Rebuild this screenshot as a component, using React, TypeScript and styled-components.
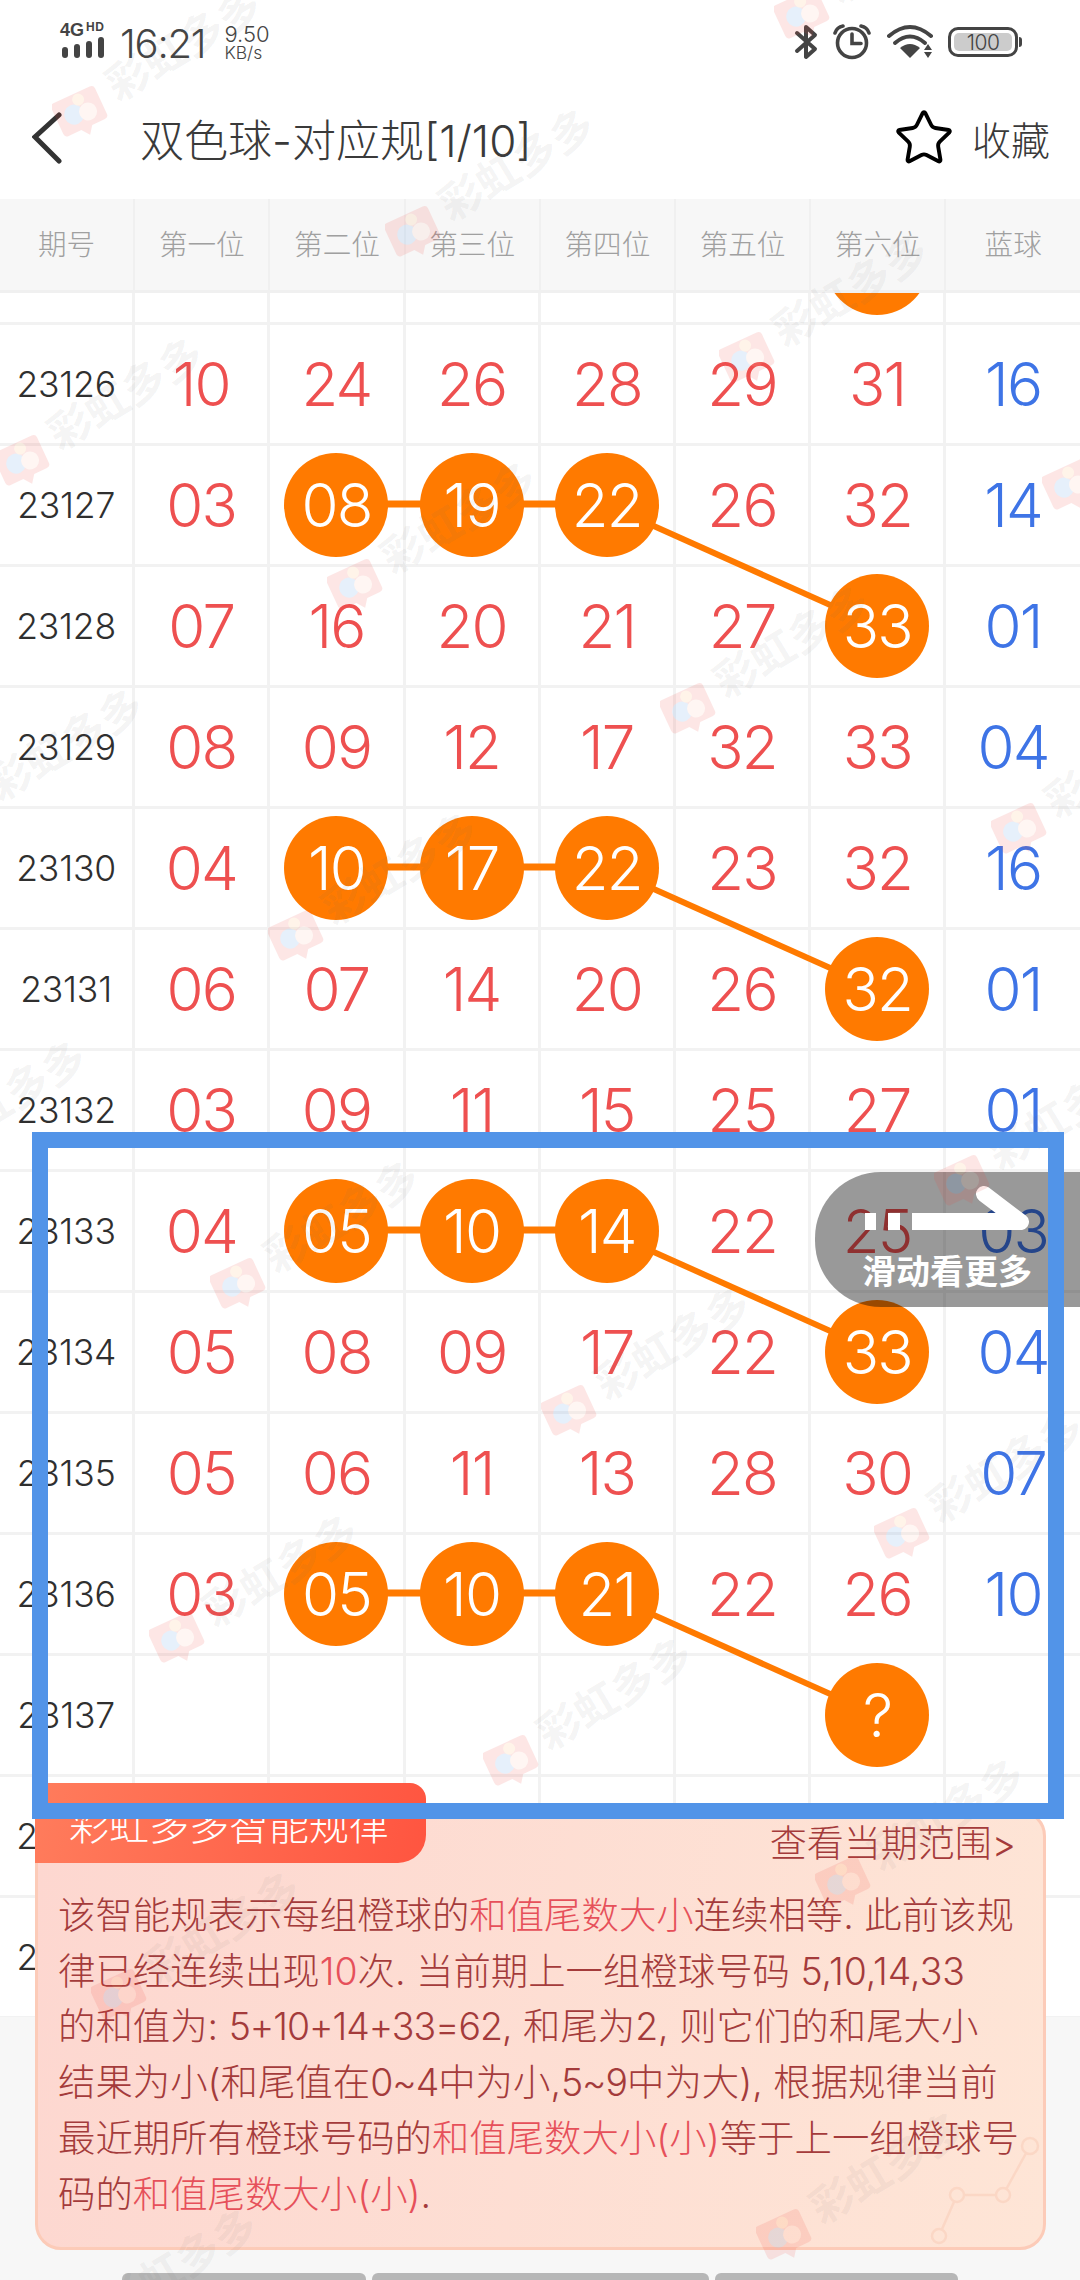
import React from 'react';
import styled, { createGlobalStyle } from 'styled-components';
import { Star } from 'lucide-react';

const GlobalStyle = createGlobalStyle`
    html, body {
        margin: 0;
        padding: 0;
        background: #fff;
    }
    * {
        box-sizing: border-box;
    }
`;

const FONT = `Inter, "Noto Sans CJK SC", sans-serif`;
const CJK = `"Noto Sans CJK SC", sans-serif`;
const COLUMNS = 'repeat(7, 135.2px) 1fr';

const Page = styled.div`
    position: relative;
    width: 1080px;
    height: 2280px;
    overflow: hidden;
    display: flex;
    flex-direction: column;
    background: #fff;
    font-family: ${FONT};
`;

/* status bar */
const StatusBar = styled.div`
    height: 76px;
    padding: 0 59px 0 60px;
    display: flex;
    align-items: flex-start;
    justify-content: space-between;
    color: #444;
`;

const StatusLeft = styled.div`
    display: flex;
    align-items: flex-start;
`;

const NetBox = styled.div`
    width: 46px;
    margin-top: 22px;
    display: flex;
    flex-direction: column;
`;

const NetText = styled.div`
    display: flex;
    align-items: flex-start;
    height: 15px;
    font-family: "Liberation Sans", sans-serif;
    font-weight: 700;
    font-size: 18px;
    line-height: 17px;
`;

const NetHd = styled.span`
    font-size: 12px;
    line-height: 11px;
    margin-left: 2px;
    letter-spacing: 0.6px;
`;

const Time = styled.div`
    margin: 21px 0 0 14px;
    font-size: 40px;
    line-height: 46px;
    font-weight: 300;
    letter-spacing: -1.2px;
`;

const Speed = styled.div`
    margin: 24px 0 0 19px;
    display: flex;
    flex-direction: column;
    font-weight: 300;
`;

const SpeedValue = styled.span`
    font-size: 22px;
    line-height: 20px;
`;

const SpeedUnit = styled.span`
    font-size: 17.5px;
    line-height: 18px;
`;

const StatusRight = styled.div`
    display: flex;
    align-items: flex-start;
    margin-top: 24px;
`;

const Battery = styled.div`
    position: relative;
    margin: 3px 3px 0 13px;
    width: 70px;
    height: 30px;
    padding: 3px;
    border: 3.5px solid #444;
    border-radius: 10px;

    &::after {
        content: '';
        position: absolute;
        right: -7px;
        top: 7px;
        width: 3px;
        height: 10px;
        border-radius: 0 3px 3px 0;
        background: #444;
    }
`;

const BatteryFill = styled.div`
    height: 100%;
    border-radius: 5px;
    background: #ccc;
    display: flex;
    align-items: center;
    justify-content: center;
    font-size: 21px;
    font-weight: 300;
    letter-spacing: -0.5px;
    color: #444;
`;

/* title bar */
const TitleBar = styled.div`
    height: 123px;
    padding: 0 30px 0 32px;
    display: flex;
    align-items: center;
`;

const BackIcon = styled.svg`
    width: 30px;
    height: 52px;
    margin-right: 78px;
`;

const Title = styled.div`
    flex: 1;
    font-family: ${FONT};
    font-size: 44px;
    font-weight: 300;
    color: #3a3a3a;
`;

const Favorite = styled.div`
    display: flex;
    align-items: center;
    gap: 17px;
    font-family: ${CJK};
    font-size: 39px;
    font-weight: 300;
    color: #3a3a3a;
`;

/* table */
const TableHead = styled.div`
    height: 94px;
    display: grid;
    grid-template-columns: ${COLUMNS};
    background: #f7f7f7;
    border-bottom: 3px solid #f0f0f0;
`;

const HeadCell = styled.div`
    display: flex;
    align-items: center;
    justify-content: center;
    border-right: 2px solid #f0f0f0;
    padding-bottom: 4px;
    font-family: ${CJK};
    font-size: 28.6px;
    font-weight: 300;
    color: #a0a0a0;

    &:last-child {
        border-right: none;
    }
`;

const TableBody = styled.div`
    position: relative;
    height: 1724px;
    overflow: hidden;
    background: #fff;
`;

const RowList = styled.div`
    margin-top: -89px;
`;

const Row = styled.div`
    height: 121px;
    display: grid;
    grid-template-columns: ${COLUMNS};
    border-bottom: 3px solid #f2f2f2;
`;

const Cell = styled.div`
    display: flex;
    align-items: center;
    justify-content: center;
    border-right: 3px solid #f2f2f2;

    &:last-child {
        border-right: none;
    }
`;

const IssueText = styled.span`
    font-size: 35.5px;
    font-weight: 300;
    letter-spacing: -0.2px;
    color: #2f2f2f;
`;

const NumberText = styled.span<{ $blue?: boolean }>`
    font-size: 60px;
    font-weight: 300;
    letter-spacing: -1.8px;
    color: ${(p) => (p.$blue ? '#3e74e6' : '#ee5050')};
`;

const Ball = styled.div`
    position: relative;
    width: 104px;
    height: 104px;
    flex-shrink: 0;
    border-radius: 50%;
    background: #ff7a00;
    display: flex;
    align-items: center;
    justify-content: center;
    font-size: 60px;
    font-weight: 300;
    letter-spacing: -1.8px;
    color: #fff;
`;

const LinkLayer = styled.svg`
    position: absolute;
    left: 0;
    top: 0;
    width: 1080px;
    height: 1724px;
`;

/* footer */
const Footer = styled.div`
    flex: 1;
    background: #f7f7f7;
    display: flex;
    align-items: flex-end;
    justify-content: center;
    gap: 6px;
`;

const FooterTab = styled.div<{ $w: number }>`
    width: ${(p) => p.$w}px;
    height: 7px;
    background: #b7b7b7;
    border-radius: 6px 6px 0 0;
`;

/* rule card */
const RuleCard = styled.div`
    position: absolute;
    left: 35px;
    top: 1810px;
    width: 1011px;
    height: 440px;
    padding: 7px 27px 0 20px;
    border: 3px solid #fccbb8;
    border-radius: 26px;
    background: linear-gradient(100deg, #fdd7d0 0%, #fee5d6 100%);
    color: #a43b3b;
    font-family: ${FONT};
`;

const RuleTag = styled.div`
    position: absolute;
    left: -3px;
    top: -30px;
    width: 391px;
    height: 80px;
    padding-left: 34px;
    display: flex;
    align-items: center;
    border-radius: 0 16px 28px 0;
    background: linear-gradient(100deg, #ff7c5c 0%, #ff5540 100%);
    font-family: ${CJK};
    font-size: 40px;
    font-weight: 300;
    color: #fff;
    white-space: nowrap;
`;

const RangeLink = styled.div`
    height: 48px;
    line-height: 48px;
    text-align: right;
    font-size: 37px;
    font-weight: 300;
`;

const RuleText = styled.div`
    margin-top: 20px;
    font-size: 37.4px;
    line-height: 55.7px;
    font-weight: 300;
    white-space: nowrap;
`;

const Mark = styled.span`
    color: #e6505a;
`;

const Tight = styled.span`
    letter-spacing: -1px;
`;

const CardDecor = styled.svg`
    position: absolute;
    right: 0;
    bottom: 0;
    width: 120px;
    height: 120px;
    opacity: 0.7;
`;

/* overlays */
const SwipeTip = styled.div`
    position: absolute;
    left: 815px;
    top: 1172px;
    width: 265px;
    height: 135px;
    padding: 76px 0 0 47px;
    border-radius: 66px 0 0 66px;
    background: rgba(0, 0, 0, 0.4);
    font-family: ${CJK};
    font-size: 34px;
    line-height: 44px;
    font-weight: 700;
    color: #fff;
    white-space: nowrap;
`;

const SwipeArrow = styled.svg`
    position: absolute;
    left: 45px;
    top: 12px;
    width: 175px;
    height: 60px;
`;

const Watermark = styled.div`
    position: absolute;
    width: 0;
    height: 0;
    pointer-events: none;
`;

const WatermarkLogo = styled.svg`
    position: absolute;
    left: -28px;
    top: -28px;
    width: 56px;
    height: 56px;
    opacity: 0.13;
`;

const WatermarkText = styled.span`
    position: absolute;
    left: 28px;
    top: -52px;
    transform: rotate(-31deg);
    transform-origin: 0 50%;
    font-family: ${CJK};
    font-size: 43px;
    line-height: 50px;
    font-weight: 700;
    color: rgba(110, 110, 110, 0.08);
    white-space: nowrap;
`;

const HighlightFrame = styled.div`
    position: absolute;
    left: 32px;
    top: 1132px;
    width: 1032px;
    height: 687px;
    border: 16px solid #5294e8;
    pointer-events: none;
`;

const HEADERS = ['期号', '第一位', '第二位', '第三位', '第四位', '第五位', '第六位', '蓝球'];

interface DrawRow {
    issue: string;
    nums: string[];
    balls: number[];
}

const DRAWS: DrawRow[] = [
    { issue: '23125', nums: ['', '', '', '', '', '', ''], balls: [5] },
    { issue: '23126', nums: ['10', '24', '26', '28', '29', '31', '16'], balls: [] },
    { issue: '23127', nums: ['03', '08', '19', '22', '26', '32', '14'], balls: [1, 2, 3] },
    { issue: '23128', nums: ['07', '16', '20', '21', '27', '33', '01'], balls: [5] },
    { issue: '23129', nums: ['08', '09', '12', '17', '32', '33', '04'], balls: [] },
    { issue: '23130', nums: ['04', '10', '17', '22', '23', '32', '16'], balls: [1, 2, 3] },
    { issue: '23131', nums: ['06', '07', '14', '20', '26', '32', '01'], balls: [5] },
    { issue: '23132', nums: ['03', '09', '11', '15', '25', '27', '01'], balls: [] },
    { issue: '23133', nums: ['04', '05', '10', '14', '22', '25', '03'], balls: [1, 2, 3] },
    { issue: '23134', nums: ['05', '08', '09', '17', '22', '33', '04'], balls: [5] },
    { issue: '23135', nums: ['05', '06', '11', '13', '28', '30', '07'], balls: [] },
    { issue: '23136', nums: ['03', '05', '10', '21', '22', '26', '10'], balls: [1, 2, 3] },
    { issue: '23137', nums: ['', '', '', '', '', '?', ''], balls: [5] },
    { issue: '23138', nums: ['', '', '', '', '', '', ''], balls: [] },
    { issue: '23139', nums: ['', '', '', '', '', '', ''], balls: [] },
];

// logo centres of the repeated watermark
const WATERMARKS = [
    [80, 113], [802, 15], [413, 233], [22, 462], [355, 586], [747, 359], [1070, 486],
    [688, 710], [1019, 830], [-38, 813], [296, 937], [-95, 1165], [238, 1285], [962, 1182],
    [569, 1412], [902, 1535], [177, 1639], [511, 1762], [843, 1883], [119, 1996], [784, 2236],
    [76, 2333],
];

const cellCenterX = (numIndex: number) => 135.2 * (numIndex + 1) + 66;
const rowCenterY = (rowIndex: number) => rowIndex * 121 - 89 + 59;

const StatusIcons = () => (
    <>
        <svg width="24" height="36" viewBox="0 0 24 36" fill="none" stroke="#444" strokeWidth="4" strokeLinejoin="round" strokeLinecap="round">
            <path d="M3 9 L21 25 L12 33 L12 3 L21 11 L3 27" />
        </svg>
        <svg width="38" height="36" viewBox="0 0 38 36" fill="none" stroke="#444" strokeWidth="3.6" style={{ marginLeft: 15 }}>
            <circle cx="19" cy="19" r="14.5" />
            <path d="M19 10 V19.5 H28" strokeLinecap="round" />
            <path d="M2 9 Q4 3 10 2 M36 9 Q34 3 28 2" strokeLinecap="round" />
        </svg>
        <svg width="48" height="36" viewBox="0 0 48 36" style={{ marginLeft: 16 }}>
            <g fill="none" stroke="#444" strokeWidth="4" strokeLinecap="round">
                <path d="M2 12 Q23 -6 44 12" />
                <path d="M8 19 Q23 6 38 19" />
            </g>
            <path d="M13 24 Q23 16 33 24 L23 34 Z" fill="#444" />
            <path d="M41 20 L45 26 L37 26 Z M37 28 L45 28 L41 34 Z" fill="#444" />
        </svg>
    </>
);

const WatermarkMark = () => (
    <WatermarkLogo viewBox="0 0 56 56">
        <g transform="rotate(-25 28 28)">
            <path d="M8 8 H48 Q52 8 52 12 V40 Q52 44 48 44 H34 L28 52 L22 44 H8 Q4 44 4 40 V12 Q4 8 8 8 Z" fill="#f0443c" />
            <circle cx="22" cy="27" r="10" fill="#4a90e2" />
            <circle cx="36" cy="30" r="9" fill="#ffc2a8" />
            <circle cx="32" cy="15" r="6" fill="#ffb060" />
        </g>
    </WatermarkLogo>
);

export default function App() {
    return (
        <Page>
            <GlobalStyle />
            <StatusBar>
                <StatusLeft>
                    <NetBox>
                        <NetText>4G<NetHd>HD</NetHd></NetText>
                        <svg width="46" height="21" viewBox="0 0 46 21" fill="#444">
                            <rect x="2" y="10" width="6" height="11" rx="3" />
                            <rect x="14" y="7" width="6" height="14" rx="3" />
                            <rect x="26" y="4" width="6" height="17" rx="3" />
                            <rect x="38" y="0" width="6" height="21" rx="3" />
                        </svg>
                    </NetBox>
                    <Time>16:21</Time>
                    <Speed>
                        <SpeedValue>9.50</SpeedValue>
                        <SpeedUnit>KB/s</SpeedUnit>
                    </Speed>
                </StatusLeft>
                <StatusRight>
                    <StatusIcons />
                    <Battery><BatteryFill>100</BatteryFill></Battery>
                </StatusRight>
            </StatusBar>

            <TitleBar>
                <BackIcon viewBox="0 0 30 52" fill="none" stroke="#333" strokeWidth="5" strokeLinecap="round">
                    <path d="M27 3 L3 25 L27 49" />
                </BackIcon>
                <Title>双色球-对应规[1/10]</Title>
                <Favorite>
                    <Star size={62} color="#000" strokeWidth={1.5} />
                    收藏
                </Favorite>
            </TitleBar>

            <TableHead>
                {HEADERS.map((h) => <HeadCell key={h}>{h}</HeadCell>)}
            </TableHead>

            <TableBody>
                <LinkLayer viewBox="0 0 1080 1724" fill="none" stroke="#ff7a00">
                    {DRAWS.map((d, i) => {
                        if (d.balls.length !== 3) return null;
                        const y = rowCenterY(i);
                        return (
                            <g key={d.issue}>
                                <path d={`M${cellCenterX(1)} ${y - 1} H${cellCenterX(3)}`} strokeWidth="7" />
                                <path d={`M${cellCenterX(3)} ${y} L${cellCenterX(5)} ${y + 121}`} strokeWidth="6" />
                            </g>
                        );
                    })}
                </LinkLayer>
                <RowList>
                    {DRAWS.map((d) => (
                        <Row key={d.issue}>
                            <Cell><IssueText>{d.issue}</IssueText></Cell>
                            {d.nums.map((n, idx) => (
                                <Cell key={idx}>
                                    {d.balls.includes(idx)
                                        ? <Ball>{n}</Ball>
                                        : <NumberText $blue={idx === 6}>{n}</NumberText>}
                                </Cell>
                            ))}
                        </Row>
                    ))}
                </RowList>
            </TableBody>

            <Footer>
                <FooterTab $w={244} />
                <FooterTab $w={337} />
                <FooterTab $w={243} />
            </Footer>

            <RuleCard>
                <RuleTag>彩虹多多智能规律</RuleTag>
                <RangeLink>查看当期范围&gt;</RangeLink>
                <RuleText>
                    该智能规表示每组橙球的<Mark>和值尾数大小</Mark>连续相等. 此前该规<br />
                    律已经连续出现<Mark>10</Mark>次. 当前期上一组橙球号码 5,10,14,33<br />
                    的和值为: <Tight>5+10+14+33=62</Tight>, 和尾为2, 则它们的和尾大小<br />
                    结果为小(和尾值在<Tight>0~4</Tight>中为小,<Tight>5~9</Tight>中为大), 根据规律当前<br />
                    最近期所有橙球号码的<Mark>和值尾数大小(小)</Mark>等于上一组橙球号<br />
                    码的<Mark>和值尾数大小(小)</Mark>.
                </RuleText>
                <CardDecor viewBox="0 0 120 120" fill="none" stroke="#fbd2bf" strokeWidth="2.5">
                    <path d="M16 109 L34 68 H80 L107 19" />
                    <circle cx="16" cy="109" r="7" fill="#fee5d6" />
                    <circle cx="34" cy="68" r="7" fill="#fee5d6" />
                    <circle cx="80" cy="68" r="7" fill="#fee5d6" />
                    <circle cx="107" cy="19" r="8" fill="#fee5d6" />
                </CardDecor>
            </RuleCard>

            <SwipeTip>
                <SwipeArrow viewBox="0 0 175 60" fill="#fff">
                    <rect x="5" y="29" width="11" height="17" />
                    <rect x="28" y="29" width="12" height="17" />
                    <rect x="52" y="29" width="110" height="17" />
                    <path d="M124 10 L161 38" stroke="#fff" strokeWidth="16" strokeLinecap="round" />
                </SwipeArrow>
                滑动看更多
            </SwipeTip>

            {WATERMARKS.map(([x, y]) => (
                <Watermark key={`${x}-${y}`} style={{ left: x, top: y }}>
                    <WatermarkMark />
                    <WatermarkText>彩虹多多</WatermarkText>
                </Watermark>
            ))}

            <HighlightFrame />
        </Page>
    );
}
